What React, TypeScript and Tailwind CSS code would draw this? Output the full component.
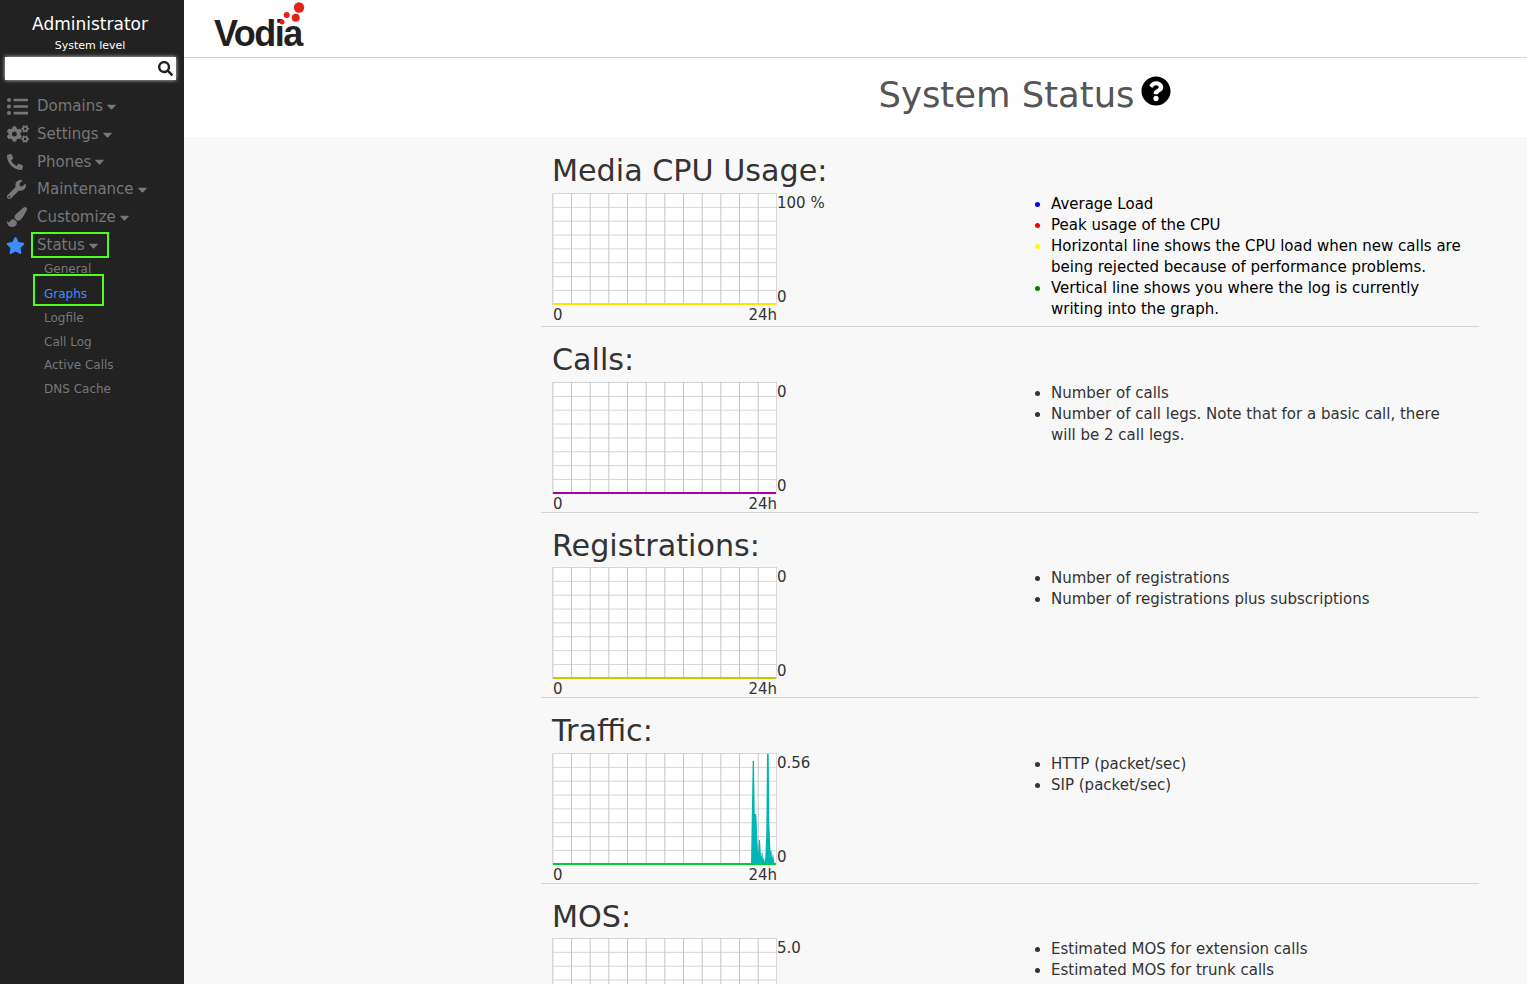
import React from "react";
import { FaListUl, FaCogs, FaPhone, FaWrench, FaPaintBrush, FaStar, FaSearch, FaQuestionCircle, FaCaretDown } from "react-icons/fa";

const FONT = "font-['DejaVu_Sans',sans-serif]";

function Chart({ line, spikes }: { line: string; spikes?: boolean }) {
  const xs = Array.from({ length: 13 }, (_, i) => 0.83 + i * 18.67);
  const ys = Array.from({ length: 8 }, (_, i) => 0.5 + i * 13.85);
  return (
    <svg width="225" height="112" viewBox="0 0 225 112" className="block shrink-0">
      <rect x="1" y="0" width="224" height="112" fill="#ffffff" />
      {ys.map((y) => (
        <line key={y} x1="1" x2="225" y1={y} y2={y} stroke="#d6d6d6" strokeWidth="1" />
      ))}
      {xs.map((x) => (
        <line key={x} x1={x} x2={x} y1="0" y2="112" stroke="#c6c6c6" strokeWidth="1" />
      ))}
      {spikes && (
        <path
          d="M199 111 L200.7 8 L202 8 L202.7 61 L204.3 61 L205.5 90 L206.2 100 L206.8 87 L208 87 L209 104 L210.2 98 L211 107 L212 104 L213 110 L214.3 80 L215 1 L216.7 1 L217.3 70 L218.5 98 L219.5 98 L220 106 L221 100 L222 108 L223 111 Z"
          fill="#00b5b5"
        />
      )}
      <line x1="1" x2="224" y1="111" y2="111" stroke={line} strokeWidth="2" />
    </svg>
  );
}

type Item = { text: string; marker?: string };

function Section({ title, top, line, items, head, first, spikes, dark }: { title: string; top: string; line: string; items: Item[]; head: string; first?: boolean; spikes?: boolean; dark?: boolean }) {
  return (
    <section className={`${first ? "h-[190px]" : "h-[185.67px]"} shrink-0 border-b border-[#d4d4d4]`}>
      <h2 className={`${head} pl-[11px] text-[30.2px] leading-[38px] text-[#333]`}>{title}</h2>
      <div className="flex">
        <div className="w-[510px] pl-[11px]">
          <div className="flex">
            <Chart line={line} spikes={spikes} />
            <div className="flex h-[113px] flex-col justify-between text-[15px] leading-[18px] text-[#333]">
              <span className="pt-[1px]">{top}</span>
              <span>0</span>
            </div>
          </div>
          <div className="flex w-[225px] justify-between text-[15px] leading-[18px] text-[#333]">
            <span className="pl-[1px]">0</span>
            <span>24h</span>
          </div>
        </div>
        <ul className={`mt-[1px] h-fit w-[415px] list-disc text-[15px] leading-[21px] ${dark ? "text-black" : "text-[#333]"}`}>
          {items.map((it) => (
            <li key={it.text} className={it.marker}>{it.text}</li>
          ))}
        </ul>
      </div>
    </section>
  );
}

const NAV = [
  { label: "Domains", Icon: FaListUl, size: "text-[21px]" },
  { label: "Settings", Icon: FaCogs, size: "text-[22px]" },
  { label: "Phones", Icon: FaPhone, size: "text-[16px] -scale-x-100" },
  { label: "Maintenance", Icon: FaWrench, size: "text-[19px]" },
  { label: "Customize", Icon: FaPaintBrush, size: "text-[20px]" },
];

export default function App() {
  return (
    <div className={`flex h-[984px] w-[1527px] overflow-hidden bg-[#f8f8f8] ${FONT}`}>
      <aside className="w-[184px] shrink-0 bg-[#222222]">
        <div className="w-[180px] pt-[12px] text-center text-white">
          <div className="text-[17px] leading-[24px]">Administrator</div>
          <div className="text-[11px] leading-[20px]">System level</div>
        </div>
        <div className="ml-[5px] mt-[1px] flex h-[23px] w-[171px] items-center justify-end bg-white pr-[3px] shadow-[0_0_4px_rgba(255,255,255,0.8)]">
          <FaSearch className="text-[15px] text-[#222]" />
        </div>
        <nav className="mt-[12.5px]">
          {NAV.map(({ label, Icon, size }) => (
            <div key={label} className="flex h-[27.75px] items-center text-[#777777]">
              <span className="flex w-[37px] pl-[7px]"><Icon className={size} /></span>
              <span className="text-[15px]">{label}</span>
              <FaCaretDown className="ml-[1px] text-[15px]" />
            </div>
          ))}
          <div className="flex h-[27.75px] items-center text-[#777777]">
            <span className="flex w-[31px] pl-[6px]"><FaStar className="text-[19px] text-[#3b8eff]" /></span>
            <span className="flex h-[26px] w-[78px] items-center border-2 border-[#4dff1f] pl-1 text-[15px]">
              Status
              <FaCaretDown className="ml-[1px] text-[15px]" />
            </span>
          </div>
        </nav>
        <ul className="text-[12px] text-[#777777]">
          <li className="h-[14.5px] pl-[44px] leading-[20px]">General</li>
          <li className="relative ml-[33px] h-[32px] w-[71px] border-2 border-[#4dff1f] bg-[#222222] pl-[9px] pt-[9px] leading-[18px] text-[#3b8eff]">Graphs</li>
          <li className="h-[24px] pl-[44px] leading-[24px]">Logfile</li>
          <li className="h-[23.5px] pl-[44px] leading-[24px]">Call Log</li>
          <li className="h-[24px] pl-[44px] leading-[24px]">Active Calls</li>
          <li className="h-[24px] pl-[44px] leading-[24px]">DNS Cache</li>
        </ul>
      </aside>
      <main className="flex min-w-0 flex-1 flex-col">
        <header className="h-[58px] shrink-0 border-b border-[#d4d4d4] bg-white pl-[30px]">
          <svg width="95" height="57" viewBox="0 0 95 57" className="block">
            <text x="0" y="46" fontFamily="'Liberation Sans',sans-serif" fontWeight="700" fontSize="36" letterSpacing="-1.5" fill="#231f20">Vodia</text>
            <circle cx="85" cy="7.5" r="5.2" fill="#e2231a" />
            <circle cx="81.7" cy="17.7" r="4" fill="#e2231a" />
            <circle cx="72.7" cy="15" r="3" fill="#e2231a" />
            <circle cx="68" cy="22" r="2.5" fill="#e2231a" />
          </svg>
        </header>
        <div className="flex h-[79px] shrink-0 items-start justify-center bg-white pl-[338px] pt-[15px]">
          <span className="text-[35.4px] leading-[44px] text-[#555]">System Status</span>
          <FaQuestionCircle className="ml-[6px] mt-[3px] text-[30px] text-black" />
        </div>
        <div className="ml-[357px] flex w-[938px] flex-col">
          <Section first dark head="h-[56px] pt-[15px]" title="Media CPU Usage:" top="100 %" line="#ffe600" items={[
            { text: "Average Load", marker: "marker:text-[#0000ff]" },
            { text: "Peak usage of the CPU", marker: "marker:text-[#ff0000]" },
            { text: "Horizontal line shows the CPU load when new calls are being rejected because of performance problems.", marker: "marker:text-[#ffff00]" },
            { text: "Vertical line shows you where the log is currently writing into the graph.", marker: "marker:text-[#008000]" },
          ]} />
          <Section head="h-[54.67px] pt-[14px]" title="Calls:" top="0" line="#a800a8" items={[
            { text: "Number of calls" },
            { text: "Number of call legs. Note that for a basic call, there will be 2 call legs." },
          ]} />
          <Section head="h-[54.67px] pt-[14px]" title="Registrations:" top="0" line="#c8c800" items={[
            { text: "Number of registrations" },
            { text: "Number of registrations plus subscriptions" },
          ]} />
          <Section head="h-[54.67px] pt-[14px]" spikes title="Traffic:" top="0.56" line="#00cc33" items={[
            { text: "HTTP (packet/sec)" },
            { text: "SIP (packet/sec)" },
          ]} />
          <Section head="h-[54px] pt-[14px]" title="MOS:" top="5.0" line="#00cc33" items={[
            { text: "Estimated MOS for extension calls" },
            { text: "Estimated MOS for trunk calls" },
          ]} />
        </div>
      </main>
    </div>
  );
}
